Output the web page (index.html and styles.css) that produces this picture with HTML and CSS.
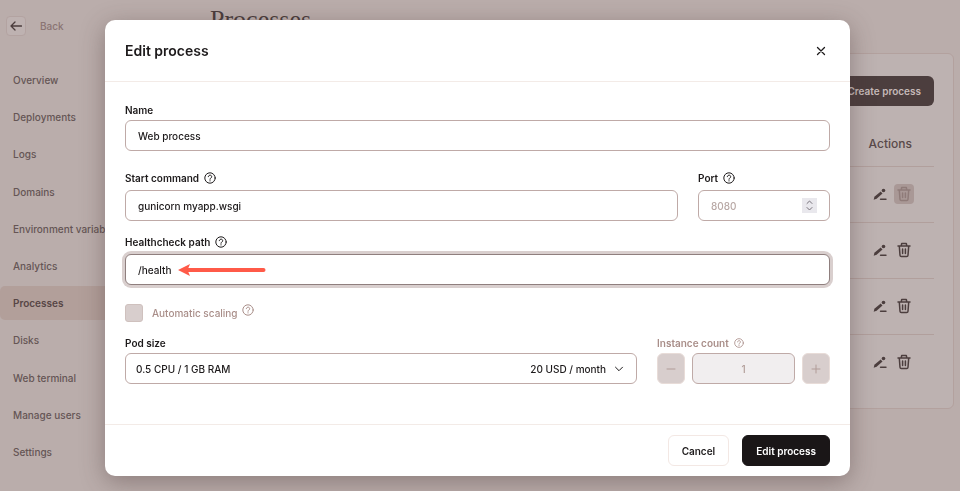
FILE: index.html
```html
<!DOCTYPE html>
<html lang="en">
<head>
<meta charset="utf-8">
<meta name="viewport" content="width=device-width, initial-scale=1">
<title>Edit process</title>
<link rel="stylesheet" href="styles.css">
</head>
<body>
<svg class="sprite" aria-hidden="true">
  <symbol id="help" viewBox="0 0 12 12"><circle cx="6" cy="6" r="5.2"/><path d="M4.300 4.700a1.700 1.600 0 1 1 2.700 1.300C6.300 6.400 6 6.600 6 7.300M6 8.700v.3"/></symbol>
  <symbol id="pencil" viewBox="0 0 14 14"><path d="M.7 12.700l.7-3L7.700 4.500 9.500 6.400 3.600 11.700z" fill="currentColor" stroke="none"/><circle cx="10.500" cy="3.500" r="1.800" fill="currentColor" stroke="none"/><path d="M7.500 12.300h5.500"/></symbol>
  <symbol id="trash" viewBox="0 0 14 16"><path d="M1 4h12M4.200 3.800 4.700 1.500h4.600l.5 2.300M2.300 4l.7 9.300q.1 1.200 1.300 1.200h5.400q1.200 0 1.300-1.200L11.700 4M5.600 7v4.600M8.400 7v4.600"/></symbol>
</svg>
<div class="page">
  <aside class="sidebar">
    <div class="back">
      <button class="back-button" type="button" aria-label="Back"><svg viewBox="0 0 12 12"><path d="M11.500 6H1M5 2 1 6l4 4"/></svg></button>
      <a href="#">Back</a>
    </div>
    <nav class="nav">
      <a href="#">Overview</a>
      <a href="#">Deployments</a>
      <a href="#">Logs</a>
      <a href="#">Domains</a>
      <a href="#">Environment variables</a>
      <a href="#">Analytics</a>
      <a href="#" class="active">Processes</a>
      <a href="#">Disks</a>
      <a href="#">Web terminal</a>
      <a href="#">Manage users</a>
      <a href="#">Settings</a>
    </nav>
  </aside>
  <main class="main">
    <h1>Processes</h1>
    <section class="card">
      <button class="create" type="button">Create process</button>
      <table class="processes">
        <thead><tr><th>Actions</th></tr></thead>
        <tbody>
          <tr><td><div class="actions"><button type="button" aria-label="Edit"><svg class="pencil"><use href="#pencil"/></svg></button><button type="button" aria-label="Delete" disabled><svg class="trash"><use href="#trash"/></svg></button></div></td></tr>
          <tr><td><div class="actions"><button type="button" aria-label="Edit"><svg class="pencil"><use href="#pencil"/></svg></button><button type="button" aria-label="Delete"><svg class="trash"><use href="#trash"/></svg></button></div></td></tr>
          <tr><td><div class="actions"><button type="button" aria-label="Edit"><svg class="pencil"><use href="#pencil"/></svg></button><button type="button" aria-label="Delete"><svg class="trash"><use href="#trash"/></svg></button></div></td></tr>
          <tr><td><div class="actions"><button type="button" aria-label="Edit"><svg class="pencil"><use href="#pencil"/></svg></button><button type="button" aria-label="Delete"><svg class="trash"><use href="#trash"/></svg></button></div></td></tr>
        </tbody>
      </table>
    </section>
  </main>
</div>
<div class="overlay">
  <form class="modal" role="dialog" aria-labelledby="title">
    <header class="modal-header">
      <h2 id="title">Edit process</h2>
      <button class="close" type="button" aria-label="Close"><svg viewBox="0 0 10 10"><path d="M1.500 1.500l7 7M8.500 1.500l-7 7"/></svg></button>
    </header>
    <div class="modal-body">
      <div class="field">
        <label for="name">Name</label>
        <input class="control" id="name" type="text" value="Web process">
      </div>
      <div class="row row-command">
        <div class="field">
          <label class="with-help" for="command">Start command <svg class="help"><use href="#help"/></svg></label>
          <input class="control" id="command" type="text" value="gunicorn myapp.wsgi">
        </div>
        <div class="field port">
          <label class="with-help" for="port">Port <svg class="help"><use href="#help"/></svg></label>
          <div class="control-wrap">
            <input class="control" id="port" type="number" placeholder="8080">
            <svg class="stepper" viewBox="0 0 15 15"><path d="M5 5.500 7.500 3 10 5.500M5 9.500l2.500 2.500L10 9.500"/></svg>
          </div>
        </div>
      </div>
      <div class="field field-health">
        <label class="with-help" for="health">Healthcheck path <svg class="help"><use href="#help"/></svg></label>
        <div class="control-wrap">
          <input class="control focused" id="health" type="text" value="/health">
          <svg class="arrow" viewBox="0 0 88 12"><path d="M10 6H85.500" fill="none" stroke="#ff5a48" stroke-width="4" stroke-linecap="round"/><path d="M0 6 12 0 9.500 6 12 12z" fill="#ff5a48"/></svg>
        </div>
      </div>
      <div class="scaling">
        <input id="scaling" type="checkbox" disabled>
        <label for="scaling">Automatic scaling</label>
        <svg class="help"><use href="#help"/></svg>
      </div>
      <div class="row row-size">
        <div class="field">
          <label for="size">Pod size</label>
          <div class="control-wrap">
            <select class="control" id="size"><option>0.5 CPU / 1 GB RAM</option></select>
            <span class="price">20 USD / month <svg viewBox="0 0 10 10"><path d="M1.500 3.200 5 6.700l3.500-3.500"/></svg></span>
          </div>
        </div>
        <div class="field instances">
          <label for="count">Instance count <svg class="help small"><use href="#help"/></svg></label>
          <div class="counter">
            <button type="button" aria-label="Decrease" disabled><svg viewBox="0 0 10 10"><path d="M1 5h8"/></svg></button>
            <input class="control" id="count" type="text" value="1" disabled>
            <button type="button" aria-label="Increase" disabled><svg viewBox="0 0 10 10"><path d="M1 5h8M5 1v8"/></svg></button>
          </div>
        </div>
      </div>
    </div>
    <footer class="modal-footer">
      <button class="cancel" type="button">Cancel</button>
      <button class="submit" type="submit">Edit process</button>
    </footer>
  </form>
</div>
</body>
</html>
```
FILE: styles.css
```css
* { box-sizing: border-box; }
body {
  margin: 0;
  background: #baadab;
  color: #1d1a1b;
  font: 500 10px/16px Inter, "Liberation Sans", sans-serif;
}
button, input, select { font: inherit; color: inherit; }
button { padding: 0; border: 0; background: none; }
a { color: inherit; text-decoration: none; }
svg { display: block; flex: none; fill: none; stroke: currentColor; stroke-linecap: round; stroke-linejoin: round; }
.sprite { position: absolute; width: 0; height: 0; }

.page { display: flex; height: 100vh; overflow: hidden; }
.sidebar { display: flex; flex-direction: column; width: 190px; padding: 16px 0 22px; color: #655555; }
.back { display: flex; align-items: center; gap: 14px; height: 20px; margin-bottom: 27px; padding-left: 6px; color: #8a7473; }
.back-button { display: grid; place-items: center; width: 20px; height: 20px; border: 1px solid #b3a3a1; border-radius: 4px; background: #beb2b1; color: #4b3d3d; }
.back-button svg { width: 12px; height: 12px; stroke-width: 1.3; }
.nav { display: flex; flex: 1; flex-direction: column; justify-content: space-between; }
.nav a { padding: 9px 13px; border-radius: 5px; white-space: nowrap; }
.nav .active { background: #b29f9a; color: #574646; font-weight: 600; }

.main { flex: 1; padding: 6px 6px 0 20px; }
h1 { margin: 0 0 19px; color: #4b3d3d; font: 400 26px/28px "Liberation Serif", serif; }
.card { padding: 22px 19px 18px; border: 1px solid #b3a19e; border-radius: 6px; background: #bdb2b1; }
.create { display: block; height: 30px; margin-left: auto; padding: 0 13px; border-radius: 6px; background: #4c3e3e; color: #c5b9b8; font-weight: 600; }
.processes { width: 100%; border-collapse: collapse; }
.processes th { height: 60px; padding: 17px 22px 0 0; text-align: right; color: #594949; font-size: 12px; font-weight: 500; }
.processes td { height: 56px; padding: 0; border-top: 1px solid #b19f9c; }
.actions { display: flex; justify-content: flex-end; gap: 4px; padding-right: 20px; color: #4c3e3e; }
.actions button { display: grid; place-items: center; width: 20px; height: 20px; border-radius: 4px; }
.actions button:disabled { background: #a99896; color: #8f7b79; }
.pencil { width: 14px; height: 14px; stroke-width: 1.4; }
.trash { width: 14px; height: 16px; stroke-width: 1.5; }

.overlay { position: fixed; inset: 0; padding: 20px 110px 15px 105px; }
.modal { border-radius: 10px; background: #fff; box-shadow: 0 6px 24px rgba(70, 50, 50, .4); }
.modal-header { display: flex; align-items: center; justify-content: space-between; padding: 19px 20px 18px; border-bottom: 1px solid #f3ebe7; }
h2 { margin: 0; font-size: 14px; line-height: 24px; font-weight: 600; }
.close { padding: 4px; }
.close svg { width: 10px; height: 10px; stroke-width: 1.3; }
.modal-body { padding: 20px 20px 40px; }
.field { display: flex; flex-direction: column; gap: 2px; min-width: 0; }
label { display: flex; align-items: center; gap: 5px; }
.field label { font-weight: 600; }
.with-help { height: 20px; }
.help { width: 12px; height: 12px; }
.help.small { width: 10px; height: 10px; }
.control-wrap { position: relative; }
.control { display: block; width: 100%; min-width: 0; height: 31px; padding: 0 12px; border: 1px solid #bfaaa7; border-radius: 6px; outline: 0; background: #fff; appearance: none; font-weight: 500; }
.control::placeholder { color: #b8a8a5; opacity: 1; }
.control[type="number"] { appearance: textfield; }
.control::-webkit-inner-spin-button { display: none; }
select.control { padding: 0 10px; }
.focused { border-color: #8f7f7e; box-shadow: 0 0 0 3px #d9cfce; }
.row { display: grid; gap: 20px; }
.row-command { grid-template-columns: 1fr 132px; margin: 17px 0 11px; }
.stepper { position: absolute; top: 8px; right: 13px; width: 15px; height: 15px; background: #e9e8ed; color: #77727a; }
.arrow { position: absolute; top: 10px; left: 53px; width: 88px; height: 12px; stroke: none; }
.scaling { display: flex; align-items: center; gap: 4px; margin: 19px 0 13px; color: #a98e89; }
.scaling input { width: 18px; height: 18px; margin: 0 5px 0 0; border: 1px solid #cfc1be; border-radius: 3px; background: #d8cecd; appearance: none; }
.scaling .help { align-self: flex-start; }
.row-size { grid-template-columns: 1fr 173px; }
.price { position: absolute; top: 0; right: 13px; display: flex; align-items: center; gap: 8px; height: 31px; pointer-events: none; }
.price svg { width: 10px; height: 10px; }
.instances { color: #a98e89; }
.counter { display: grid; grid-template-columns: 28px 1fr 28px; gap: 7px; }
.counter button { display: grid; place-items: center; border: 1px solid #e8dcd8; border-radius: 6px; background: #d8cecd; color: #b19c98; }
.counter svg { width: 10px; height: 10px; }
.counter .control { background: #f1eeef; color: #b19c98; text-align: center; }
.modal-footer { display: flex; justify-content: flex-end; gap: 13px; padding: 10px 20px; border-top: 1px solid #f3ebe7; }
.modal-footer button { height: 31px; padding: 0 13px; border: 1px solid #f3e8e4; border-radius: 6px; font-weight: 600; }
.modal-footer .submit { border-color: #1a1617; background: #1a1617; color: #fff; }
```
